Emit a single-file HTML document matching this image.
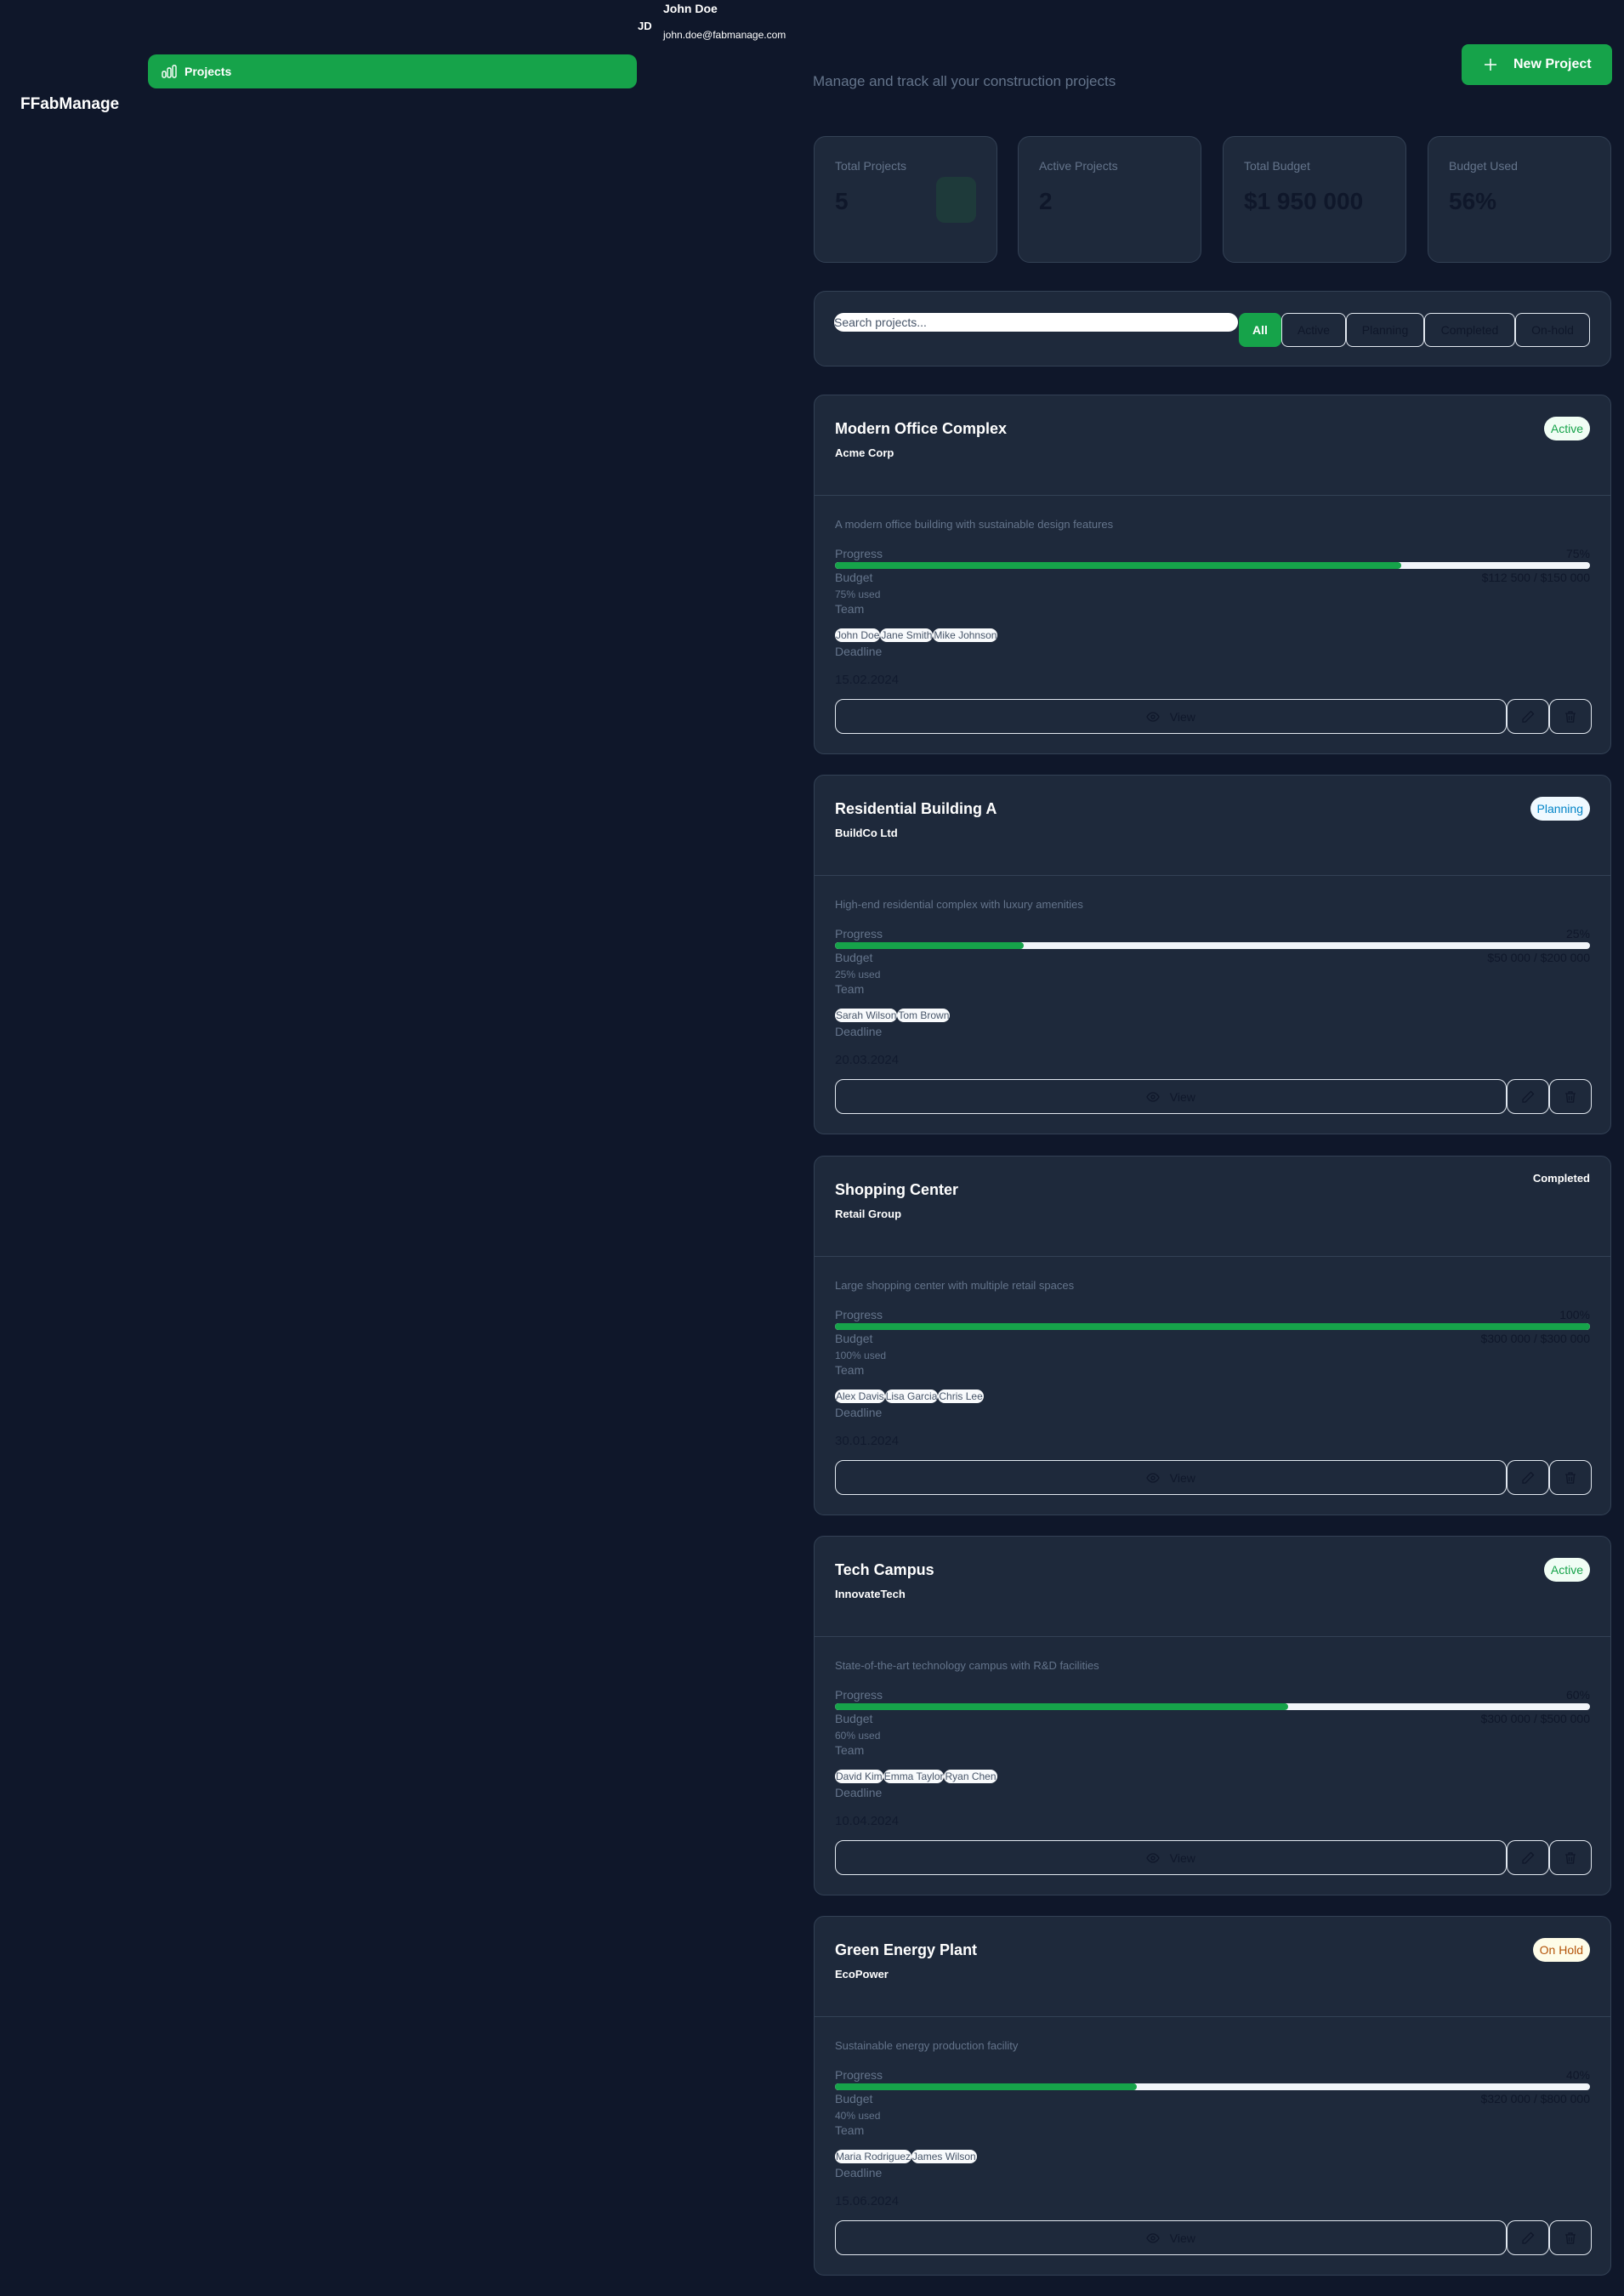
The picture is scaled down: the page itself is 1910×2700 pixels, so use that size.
<!DOCTYPE html>
<html><head><meta charset="utf-8"><style>
*{box-sizing:border-box;margin:0;padding:0}
body{width:1910px;height:2700px;background:#0f172a;font-family:"Liberation Sans",sans-serif;position:relative;overflow:hidden;color:#fff}
.a{position:absolute}
.card{position:absolute;left:957px;width:938px;height:423px;background:#1e293b;border:1px solid #334155;border-radius:12px}
.card .a{white-space:nowrap}
.t{left:24px;top:28px;font-size:18px;font-weight:bold;line-height:22px;color:#fff}
.cl{left:24px;top:59px;font-size:13px;font-weight:bold;line-height:18px}
.dv{left:0;right:0;top:117px;height:1px;background:#334155}
.ds{left:24px;top:143px;font-size:13px;color:#64748b;line-height:18px}
.lb{font-size:14px;color:#64748b;line-height:18px}
.bar{left:24px;right:24px;top:196px;height:8px;border-radius:4px;background:#f1f5f9;overflow:hidden}
.bar i{display:block;height:100%;background:#16a34a;border-radius:4px}
.rv{right:24px;font-size:14px;color:#0f172a;line-height:18px}
.chips{left:24px;top:274px;display:flex}
.chips span{background:#f8fafc;color:#475569;font-size:12px;line-height:16px;padding:0 1px;border-radius:8px}
.dt{left:24px;top:325px;font-size:15px;color:#111a2e;line-height:20px}
.btn{top:357px;height:41px;border:1.5px solid #e2e8f0;border-radius:10px;display:flex;align-items:center;justify-content:center;color:#0f172a;font-size:14px}
.bd{top:25px;height:28px;border-radius:14px;font-size:14px;line-height:28px;padding:0 8px;right:24px}
.stat{position:absolute;top:160px;width:216px;height:149px;background:#1e293b;border:1px solid #334155;border-radius:14px}
.stat .l{position:absolute;left:24px;top:26px;font-size:14px;color:#64748b}
.stat .v{position:absolute;left:24px;top:60px;font-size:28px;font-weight:bold;color:#0f172a}
.fb{position:absolute;top:368px;height:40px;border:1.5px solid #e2e8f0;border-radius:8px;color:#0f172a;font-size:14px;display:flex;align-items:center;justify-content:center}
</style></head><body>
<div class="a" style="left:780px;top:2px;font-size:14px;font-weight:bold">John Doe</div>
<div class="a" style="left:750px;top:23px;font-size:13px;font-weight:bold">JD</div>
<div class="a" style="left:780px;top:34px;font-size:12px">john.doe@fabmanage.com</div>
<div class="a" style="left:174px;top:64px;width:575px;height:40px;background:#16a34a;border-radius:10px">
<svg class="a" style="left:16px;top:12px" width="18" height="16" viewBox="0 0 18 16" fill="none" stroke="#fff" stroke-width="1.4"><rect x="1" y="8" width="4" height="7" rx="1.5"/><rect x="7" y="4" width="4" height="11" rx="1.5"/><rect x="13" y="1" width="4" height="14" rx="1.5"/></svg>
<div class="a" style="left:43px;top:12px;font-size:14px;font-weight:bold">Projects</div></div>
<div class="a" style="left:24px;top:112px;font-size:19px;font-weight:bold">FFabManage</div>
<div class="a" style="left:956px;top:86px;font-size:17px;color:#64748b">Manage and track all your construction projects</div>
<div class="a" style="left:1719px;top:52px;width:177px;height:48px;background:#16a34a;border-radius:8px">
<svg class="a" style="left:26px;top:16px" width="16" height="16" viewBox="0 0 16 16" stroke="#fff" stroke-width="1.5"><path d="M8 1v14M1 8h14"/></svg>
<div class="a" style="left:61px;top:15px;font-size:16px;font-weight:bold">New Project</div></div>
<div class="stat" style="left:957px"><div class="l">Total Projects</div><div class="v">5</div><div style="position:absolute;left:143px;top:47px;width:47px;height:54px;border-radius:10px;background:#1e3a3a"></div></div>
<div class="stat" style="left:1197px"><div class="l">Active Projects</div><div class="v">2</div></div>
<div class="stat" style="left:1438px"><div class="l">Total Budget</div><div class="v">$1 950 000</div></div>
<div class="stat" style="left:1679px"><div class="l">Budget Used</div><div class="v">56%</div></div>
<div class="a" style="left:957px;top:342px;width:938px;height:89px;background:#1e293b;border:1px solid #334155;border-radius:14px"></div>
<div class="a" style="left:981px;top:368px;width:475px;height:22px;background:#fff;border-radius:11px;color:#475569;font-size:14px;line-height:22px">Search projects...</div>
<div class="fb" style="left:1457px;width:50px;background:#16a34a;border:none;color:#fff;font-weight:bold">All</div>
<div class="fb" style="left:1507px;width:76px">Active</div>
<div class="fb" style="left:1583px;width:92px">Planning</div>
<div class="fb" style="left:1675px;width:107px">Completed</div>
<div class="fb" style="left:1782px;width:88px">On-hold</div>

<!-- cards -->
<div class="card" style="top:464px">
<div class="a t">Modern Office Complex</div><div class="a cl">Acme Corp</div>
<div class="a bd" style="background:#f0fdf4;color:#16a34a">Active</div>
<div class="a dv"></div><div class="a ds">A modern office building with sustainable design features</div>
<div class="a lb" style="left:24px;top:177px">Progress</div><div class="a rv" style="top:177px">75%</div>
<div class="a bar"><i style="width:75%"></i></div>
<div class="a lb" style="left:24px;top:205px">Budget</div><div class="a rv" style="top:205px">$112 500 / $150 000</div>
<div class="a lb" style="left:24px;top:225px;font-size:12px">75% used</div>
<div class="a lb" style="left:24px;top:242px">Team</div>
<div class="a chips"><span>John Doe</span><span>Jane Smith</span><span>Mike Johnson</span></div>
<div class="a lb" style="left:24px;top:292px">Deadline</div>
<div class="a dt">15.02.2024</div>
<div class="a btn" style="left:24px;width:790px"><svg width="16" height="16" viewBox="0 0 16 16" fill="none" stroke="#0f172a" stroke-width="1.3"><path d="M1 8s2.5-5 7-5 7 5 7 5-2.5 5-7 5-7-5-7-5z"/><circle cx="8" cy="8" r="2"/></svg>&nbsp;&nbsp;&nbsp;View</div>
<div class="a btn" style="left:814px;width:50px"><svg width="16" height="16" viewBox="0 0 16 16" fill="none" stroke="#0f172a" stroke-width="1.3"><path d="M11.5 1.5l3 3L5 14H2v-3z"/></svg></div>
<div class="a btn" style="left:864px;width:50px"><svg width="16" height="16" viewBox="0 0 16 16" fill="none" stroke="#0f172a" stroke-width="1.3"><path d="M2 4h12M6 4V2h4v2M3.5 4l1 10h7l1-10M6.5 7v5M9.5 7v5"/></svg></div>
</div>

<div class="card" style="top:911px">
<div class="a t">Residential Building A</div><div class="a cl">BuildCo Ltd</div>
<div class="a bd" style="background:#f0f9ff;color:#0284c7">Planning</div>
<div class="a dv"></div><div class="a ds">High-end residential complex with luxury amenities</div>
<div class="a lb" style="left:24px;top:177px">Progress</div><div class="a rv" style="top:177px">25%</div>
<div class="a bar"><i style="width:25%"></i></div>
<div class="a lb" style="left:24px;top:205px">Budget</div><div class="a rv" style="top:205px">$50 000 / $200 000</div>
<div class="a lb" style="left:24px;top:225px;font-size:12px">25% used</div>
<div class="a lb" style="left:24px;top:242px">Team</div>
<div class="a chips"><span>Sarah Wilson</span><span>Tom Brown</span></div>
<div class="a lb" style="left:24px;top:292px">Deadline</div>
<div class="a dt">20.03.2024</div>
<div class="a btn" style="left:24px;width:790px"><svg width="16" height="16" viewBox="0 0 16 16" fill="none" stroke="#0f172a" stroke-width="1.3"><path d="M1 8s2.5-5 7-5 7 5 7 5-2.5 5-7 5-7-5-7-5z"/><circle cx="8" cy="8" r="2"/></svg>&nbsp;&nbsp;&nbsp;View</div>
<div class="a btn" style="left:814px;width:50px"><svg width="16" height="16" viewBox="0 0 16 16" fill="none" stroke="#0f172a" stroke-width="1.3"><path d="M11.5 1.5l3 3L5 14H2v-3z"/></svg></div>
<div class="a btn" style="left:864px;width:50px"><svg width="16" height="16" viewBox="0 0 16 16" fill="none" stroke="#0f172a" stroke-width="1.3"><path d="M2 4h12M6 4V2h4v2M3.5 4l1 10h7l1-10M6.5 7v5M9.5 7v5"/></svg></div>
</div>

<div class="card" style="top:1359px">
<div class="a t">Shopping Center</div><div class="a cl">Retail Group</div>
<div class="a bd" style="color:#fff;font-weight:bold;top:12px;padding:0;font-size:13px">Completed</div>
<div class="a dv"></div><div class="a ds">Large shopping center with multiple retail spaces</div>
<div class="a lb" style="left:24px;top:177px">Progress</div><div class="a rv" style="top:177px">100%</div>
<div class="a bar"><i style="width:100%"></i></div>
<div class="a lb" style="left:24px;top:205px">Budget</div><div class="a rv" style="top:205px">$300 000 / $300 000</div>
<div class="a lb" style="left:24px;top:225px;font-size:12px">100% used</div>
<div class="a lb" style="left:24px;top:242px">Team</div>
<div class="a chips"><span>Alex Davis</span><span>Lisa Garcia</span><span>Chris Lee</span></div>
<div class="a lb" style="left:24px;top:292px">Deadline</div>
<div class="a dt">30.01.2024</div>
<div class="a btn" style="left:24px;width:790px"><svg width="16" height="16" viewBox="0 0 16 16" fill="none" stroke="#0f172a" stroke-width="1.3"><path d="M1 8s2.5-5 7-5 7 5 7 5-2.5 5-7 5-7-5-7-5z"/><circle cx="8" cy="8" r="2"/></svg>&nbsp;&nbsp;&nbsp;View</div>
<div class="a btn" style="left:814px;width:50px"><svg width="16" height="16" viewBox="0 0 16 16" fill="none" stroke="#0f172a" stroke-width="1.3"><path d="M11.5 1.5l3 3L5 14H2v-3z"/></svg></div>
<div class="a btn" style="left:864px;width:50px"><svg width="16" height="16" viewBox="0 0 16 16" fill="none" stroke="#0f172a" stroke-width="1.3"><path d="M2 4h12M6 4V2h4v2M3.5 4l1 10h7l1-10M6.5 7v5M9.5 7v5"/></svg></div>
</div>

<div class="card" style="top:1806px">
<div class="a t">Tech Campus</div><div class="a cl">InnovateTech</div>
<div class="a bd" style="background:#f0fdf4;color:#16a34a">Active</div>
<div class="a dv"></div><div class="a ds">State-of-the-art technology campus with R&amp;D facilities</div>
<div class="a lb" style="left:24px;top:177px">Progress</div><div class="a rv" style="top:177px">60%</div>
<div class="a bar"><i style="width:60%"></i></div>
<div class="a lb" style="left:24px;top:205px">Budget</div><div class="a rv" style="top:205px">$300 000 / $500 000</div>
<div class="a lb" style="left:24px;top:225px;font-size:12px">60% used</div>
<div class="a lb" style="left:24px;top:242px">Team</div>
<div class="a chips"><span>David Kim</span><span>Emma Taylor</span><span>Ryan Chen</span></div>
<div class="a lb" style="left:24px;top:292px">Deadline</div>
<div class="a dt">10.04.2024</div>
<div class="a btn" style="left:24px;width:790px"><svg width="16" height="16" viewBox="0 0 16 16" fill="none" stroke="#0f172a" stroke-width="1.3"><path d="M1 8s2.5-5 7-5 7 5 7 5-2.5 5-7 5-7-5-7-5z"/><circle cx="8" cy="8" r="2"/></svg>&nbsp;&nbsp;&nbsp;View</div>
<div class="a btn" style="left:814px;width:50px"><svg width="16" height="16" viewBox="0 0 16 16" fill="none" stroke="#0f172a" stroke-width="1.3"><path d="M11.5 1.5l3 3L5 14H2v-3z"/></svg></div>
<div class="a btn" style="left:864px;width:50px"><svg width="16" height="16" viewBox="0 0 16 16" fill="none" stroke="#0f172a" stroke-width="1.3"><path d="M2 4h12M6 4V2h4v2M3.5 4l1 10h7l1-10M6.5 7v5M9.5 7v5"/></svg></div>
</div>

<div class="card" style="top:2253px">
<div class="a t">Green Energy Plant</div><div class="a cl">EcoPower</div>
<div class="a bd" style="background:#fefce8;color:#b45309">On Hold</div>
<div class="a dv"></div><div class="a ds">Sustainable energy production facility</div>
<div class="a lb" style="left:24px;top:177px">Progress</div><div class="a rv" style="top:177px">40%</div>
<div class="a bar"><i style="width:40%"></i></div>
<div class="a lb" style="left:24px;top:205px">Budget</div><div class="a rv" style="top:205px">$320 000 / $800 000</div>
<div class="a lb" style="left:24px;top:225px;font-size:12px">40% used</div>
<div class="a lb" style="left:24px;top:242px">Team</div>
<div class="a chips"><span>Maria Rodriguez</span><span>James Wilson</span></div>
<div class="a lb" style="left:24px;top:292px">Deadline</div>
<div class="a dt">15.06.2024</div>
<div class="a btn" style="left:24px;width:790px"><svg width="16" height="16" viewBox="0 0 16 16" fill="none" stroke="#0f172a" stroke-width="1.3"><path d="M1 8s2.5-5 7-5 7 5 7 5-2.5 5-7 5-7-5-7-5z"/><circle cx="8" cy="8" r="2"/></svg>&nbsp;&nbsp;&nbsp;View</div>
<div class="a btn" style="left:814px;width:50px"><svg width="16" height="16" viewBox="0 0 16 16" fill="none" stroke="#0f172a" stroke-width="1.3"><path d="M11.5 1.5l3 3L5 14H2v-3z"/></svg></div>
<div class="a btn" style="left:864px;width:50px"><svg width="16" height="16" viewBox="0 0 16 16" fill="none" stroke="#0f172a" stroke-width="1.3"><path d="M2 4h12M6 4V2h4v2M3.5 4l1 10h7l1-10M6.5 7v5M9.5 7v5"/></svg></div>
</div>
</body></html>
